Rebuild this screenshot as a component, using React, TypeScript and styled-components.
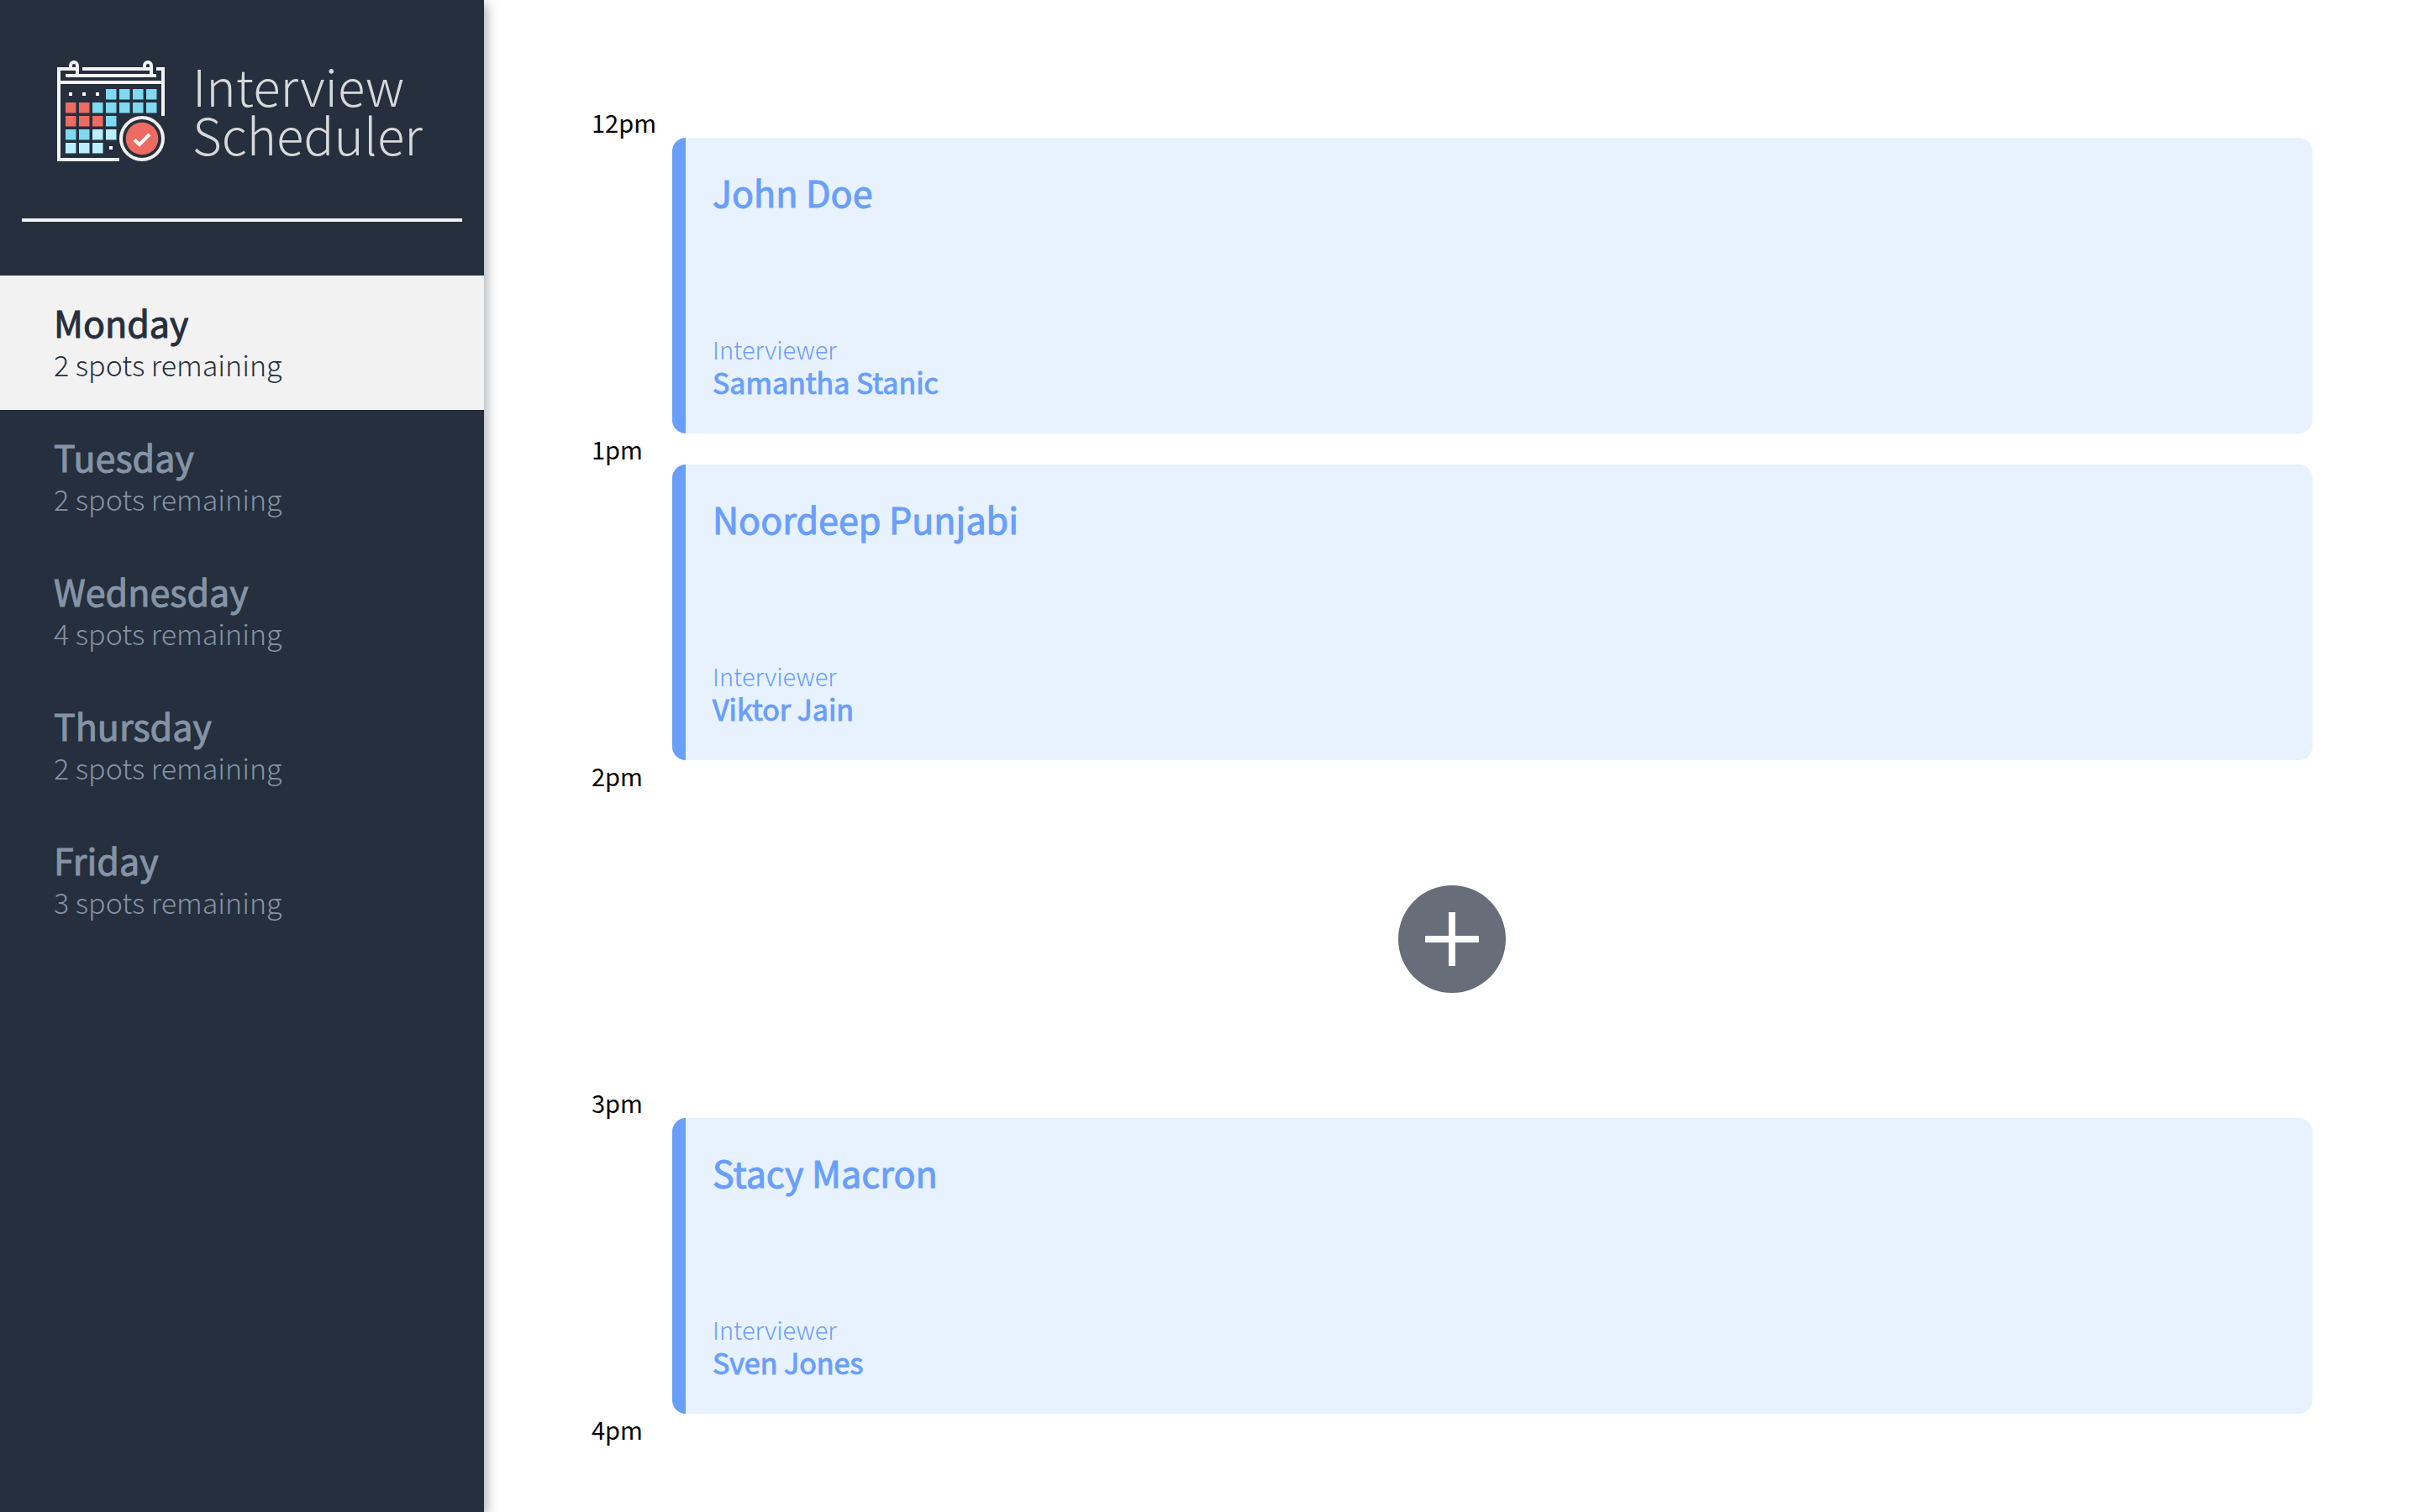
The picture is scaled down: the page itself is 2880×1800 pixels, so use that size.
import React, { useState } from "react";
import styled, { createGlobalStyle } from "styled-components";

const colors = {
  navy: "#252f3d",
  light: "#f2f2f2",
  muted: "#8593a6",
  accent: "#699ffa",
  card: "#e8f1fe",
  add: "#676e79",
};

const GlobalStyle = createGlobalStyle`
  *, *::before, *::after { box-sizing: border-box; }
  body {
    margin: 0;
    background: #fff;
    color: #000;
    font-family: "Noto Sans CJK SC", "Noto Sans", sans-serif;
  }
  h1, h2, h3, h4, p, ul { margin: 0; padding: 0; font-weight: 400; }
  button { font: inherit; border: 0; cursor: pointer; }
`;

const Layout = styled.main`
  display: flex;
  height: 100vh;
  overflow: hidden;
`;

const Sidebar = styled.aside`
  width: 20%;
  flex: none;
  background: ${colors.navy};
  box-shadow: 4px 4px 12px rgba(37, 47, 61, 0.35);
`;

const Brand = styled.div`
  display: flex;
  align-items: flex-start;
  gap: 33px;
  padding: 72px 0 68px 68px;
`;

const BrandName = styled.h1`
  color: #d6d8da;
  font-size: 60px;
  font-weight: 300;
  line-height: 58px;
`;

const Separator = styled.hr`
  height: 4px;
  margin: 0 26px 64px;
  border: 0;
  background: #f2f0f0;
`;

const DayList = styled.ul`
  list-style: none;
`;

const DayButton = styled.button<{ $selected: boolean }>`
  display: flex;
  flex-direction: column;
  justify-content: center;
  width: 100%;
  height: 160px;
  padding: 0 64px;
  text-align: left;
  color: ${(p) => (p.$selected ? colors.navy : colors.muted)};
  background: ${(p) => (p.$selected ? colors.light : "transparent")};
`;

const DayName = styled.h2`
  font-size: 43px;
  line-height: 50px;
  -webkit-text-stroke: 1px currentColor;
`;

const Spots = styled.h3`
  font-size: 34px;
  font-weight: 300;
  line-height: 51px;
`;

const Schedule = styled.section`
  flex: 1;
  padding: 127px 128px 0;
  overflow: hidden;
`;

const Time = styled.h4`
  font-size: 29px;
  line-height: 37px;
`;

const Card = styled.div`
  display: flex;
  flex-direction: column;
  justify-content: space-between;
  height: 352px;
  margin-left: 96px;
  padding: 32px 32px 41px;
  color: ${colors.accent};
  background: ${colors.card};
  border-left: 16px solid ${colors.accent};
  border-radius: 16px;
`;

const Student = styled.h2`
  font-size: 43px;
  line-height: 64px;
  -webkit-text-stroke: 1px currentColor;
`;

const InterviewerLabel = styled.h4`
  font-size: 29px;
  font-weight: 300;
  line-height: 40px;
`;

const InterviewerName = styled.h3`
  font-size: 34px;
  line-height: 40px;
  -webkit-text-stroke: 1px currentColor;
`;

const EmptySlot = styled.div`
  display: flex;
  align-items: center;
  justify-content: center;
  height: 352px;
`;

const AddButton = styled.button`
  display: flex;
  width: 128px;
  height: 128px;
  padding: 0;
  border-radius: 50%;
  background: ${colors.add};
`;

type Tone = "blue" | "pale" | "red" | "dot" | "none";
const tones: Record<string, Tone> = { b: "blue", p: "pale", r: "red", ".": "dot", " ": "none" };
const fills = { blue: "#7fd9f1", pale: "#baeefb", red: "#ed6b62" };
const weeks = ["...bbbb", "rrbbbbb", "rrrb   ", "bbpp   ", "ppp.   "];

function CalendarLogo() {
  return (
    <svg width="128" height="120" viewBox="0 0 128 120" aria-hidden="true">
      <g fill="none" stroke="#f2f2f2" strokeWidth="4">
        <path d="M24 10H2V118H74" />
        <path d="M30 10H112" />
        <path d="M118 10H126V66" />
        <path d="M10 18H118" />
        <path d="M2 26H126" />
        <path d="M16 10V6a4 4 0 0 1 8 0V18" />
        <path d="M104 10V6a4 4 0 0 1 8 0V18" />
        <circle cx="101" cy="93" r="25" />
      </g>
      {weeks.flatMap((week, row) =>
        week.split("").map((key, col) => {
          const tone = tones[key];
          const x = 10 + col * 16;
          const y = 34 + row * 16;
          if (tone === "none") return null;
          if (tone === "dot")
            return <rect key={`${row}-${col}`} x={x + 4} y={y + 4} width="4" height="4" fill="#fff" />;
          return <rect key={`${row}-${col}`} x={x} y={y} width="12.5" height="12.5" fill={fills[tone]} />;
        })
      )}
      <circle cx="101" cy="93" r="19.3" fill={fills.red} />
      <path d="M92 94.5L98 100L110 88" fill="none" stroke="#fff" strokeWidth="4" />
    </svg>
  );
}

const days = [
  { name: "Monday", spots: 2 },
  { name: "Tuesday", spots: 2 },
  { name: "Wednesday", spots: 4 },
  { name: "Thursday", spots: 2 },
  { name: "Friday", spots: 3 },
];

const appointments = [
  { time: "12pm", student: "John Doe", interviewer: "Samantha Stanic" },
  { time: "1pm", student: "Noordeep Punjabi", interviewer: "Viktor Jain" },
  { time: "2pm" },
  { time: "3pm", student: "Stacy Macron", interviewer: "Sven Jones" },
];

export default function App() {
  const [selected, setSelected] = useState("Monday");
  return (
    <Layout>
      <GlobalStyle />
      <Sidebar>
        <Brand>
          <CalendarLogo />
          <BrandName>
            Interview
            <br />
            Scheduler
          </BrandName>
        </Brand>
        <Separator />
        <nav>
          <DayList>
            {days.map((day) => (
              <li key={day.name}>
                <DayButton $selected={day.name === selected} onClick={() => setSelected(day.name)}>
                  <DayName>{day.name}</DayName>
                  <Spots>{day.spots} spots remaining</Spots>
                </DayButton>
              </li>
            ))}
          </DayList>
        </nav>
      </Sidebar>
      <Schedule>
        {appointments.map((item) => (
          <article key={item.time}>
            <Time>{item.time}</Time>
            {item.student ? (
              <Card>
                <Student>{item.student}</Student>
                <div>
                  <InterviewerLabel>Interviewer</InterviewerLabel>
                  <InterviewerName>{item.interviewer}</InterviewerName>
                </div>
              </Card>
            ) : (
              <EmptySlot>
                <AddButton aria-label="Add">
                  <svg width="128" height="128" viewBox="0 0 128 128" aria-hidden="true">
                    <path d="M32 64H96M64 32V96" stroke="#fff" strokeWidth="8" />
                  </svg>
                </AddButton>
              </EmptySlot>
            )}
          </article>
        ))}
        <Time>4pm</Time>
      </Schedule>
    </Layout>
  );
}
